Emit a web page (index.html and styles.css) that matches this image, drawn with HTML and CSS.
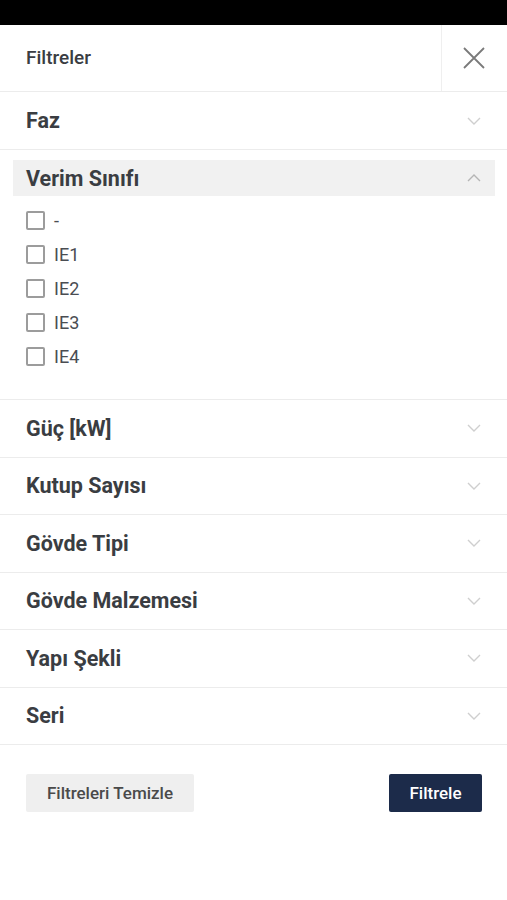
FILE: index.html
```html
<!DOCTYPE html>
<html lang="tr">
<head>
  <meta charset="UTF-8" />
  <meta name="viewport" content="width=device-width, initial-scale=1.0"/>
  <title>Filtreler</title>
  <link rel="stylesheet" href="styles.css">
</head>
<body>
  <div class="status-bar"></div>

  <div class="panel">
    <header class="panel-header">
      <h1>Filtreler</h1>
      <button class="close-button" aria-label="Kapat">
        <svg width="22" height="22" viewBox="0 0 22 22"><path d="M1 1L21 21M21 1L1 21" stroke="#7a7a7a" stroke-width="1.8" fill="none"/></svg>
      </button>
    </header>

    <div class="filter-group first">
      <div class="filter-title">
        <span>Faz</span>
        <svg class="chevron" width="14" height="8" viewBox="0 0 14 8"><path d="M1 1L7 7L13 1" stroke="#cfcfcf" stroke-width="1.4" fill="none"/></svg>
      </div>
    </div>

    <div class="filter-group open">
      <div class="filter-title">
        <span>Verim Sınıfı</span>
        <svg class="chevron" width="14" height="8" viewBox="0 0 14 8"><path d="M1 7L7 1L13 7" stroke="#b5b5b5" stroke-width="1.4" fill="none"/></svg>
      </div>
      <ul class="option-list">
        <li><label><input type="checkbox"><span class="box"></span>-</label></li>
        <li><label><input type="checkbox"><span class="box"></span>IE1</label></li>
        <li><label><input type="checkbox"><span class="box"></span>IE2</label></li>
        <li><label><input type="checkbox"><span class="box"></span>IE3</label></li>
        <li><label><input type="checkbox"><span class="box"></span>IE4</label></li>
      </ul>
    </div>

    <div class="filter-group">
      <div class="filter-title">
        <span>Güç [kW]</span>
        <svg class="chevron" width="14" height="8" viewBox="0 0 14 8"><path d="M1 1L7 7L13 1" stroke="#cfcfcf" stroke-width="1.4" fill="none"/></svg>
      </div>
    </div>

    <div class="filter-group">
      <div class="filter-title">
        <span>Kutup Sayısı</span>
        <svg class="chevron" width="14" height="8" viewBox="0 0 14 8"><path d="M1 1L7 7L13 1" stroke="#cfcfcf" stroke-width="1.4" fill="none"/></svg>
      </div>
    </div>

    <div class="filter-group">
      <div class="filter-title">
        <span>Gövde Tipi</span>
        <svg class="chevron" width="14" height="8" viewBox="0 0 14 8"><path d="M1 1L7 7L13 1" stroke="#cfcfcf" stroke-width="1.4" fill="none"/></svg>
      </div>
    </div>

    <div class="filter-group">
      <div class="filter-title">
        <span>Gövde Malzemesi</span>
        <svg class="chevron" width="14" height="8" viewBox="0 0 14 8"><path d="M1 1L7 7L13 1" stroke="#cfcfcf" stroke-width="1.4" fill="none"/></svg>
      </div>
    </div>

    <div class="filter-group">
      <div class="filter-title">
        <span>Yapı Şekli</span>
        <svg class="chevron" width="14" height="8" viewBox="0 0 14 8"><path d="M1 1L7 7L13 1" stroke="#cfcfcf" stroke-width="1.4" fill="none"/></svg>
      </div>
    </div>

    <div class="filter-group">
      <div class="filter-title">
        <span>Seri</span>
        <svg class="chevron" width="14" height="8" viewBox="0 0 14 8"><path d="M1 1L7 7L13 1" stroke="#cfcfcf" stroke-width="1.4" fill="none"/></svg>
      </div>
    </div>

    <div class="panel-actions">
      <button class="clear-button">Filtreleri Temizle</button>
      <button class="apply-button">Filtrele</button>
    </div>
  </div>
</body>
</html>
```

FILE: styles.css
```css
* {
  margin: 0;
  padding: 0;
  box-sizing: border-box;
  font-family: Roboto, 'Noto Sans', sans-serif;
}

body {
  background: #fff;
  color: #3a3d42;
  width: 507px;
  min-height: 900px;
}

.status-bar {
  height: 25px;
  background: #000;
}

.panel-header {
  display: flex;
  align-items: stretch;
  height: 67px;
  border-bottom: 1px solid #ececec;
}

.panel-header h1 {
  flex: 1;
  display: flex;
  align-items: center;
  padding: 0 0 2px 26px;
  font-size: 19px;
  font-weight: 500;
  color: #3a3d42;
}

.close-button {
  width: 66px;
  border: none;
  border-left: 1px solid #efefef;
  background: none;
  display: flex;
  align-items: center;
  justify-content: center;
  padding-right: 1px;
}

.filter-group {
  border-bottom: 1px solid #ececec;
}

.filter-title {
  display: flex;
  align-items: center;
  justify-content: space-between;
  height: 56.5px;
  padding: 0 26px;
  font-size: 21.5px;
  font-weight: 700;
  color: #3a3d42;
}

.first .filter-title {
  height: 57px;
}

.open {
  padding: 10px 12px 26px 13px;
}

.open .filter-title {
  height: 36px;
  padding: 0 14px 0 13px;
  background: #f1f1f1;
}

.option-list {
  list-style: none;
  padding: 7px 0 0 13px;
}

.option-list li {
  height: 34px;
  display: flex;
  align-items: center;
}

.option-list label {
  display: flex;
  align-items: center;
  gap: 9px;
  font-size: 18px;
  color: #4a4d52;
}

.option-list input {
  display: none;
}

.box {
  width: 19px;
  height: 19px;
  border: 2px solid #9c9c9c;
  border-radius: 2px;
}

.panel-actions {
  display: flex;
  justify-content: space-between;
  padding: 29px 25px 0 26px;
}

.clear-button,
.apply-button {
  height: 38px;
  border: none;
  border-radius: 2px;
  font-size: 17px;
  font-weight: 500;
}

.clear-button {
  width: 168px;
  background: #efefef;
  color: #4a4a4a;
}

.apply-button {
  width: 93px;
  background: #1c2b4a;
  color: #fff;
}
```
